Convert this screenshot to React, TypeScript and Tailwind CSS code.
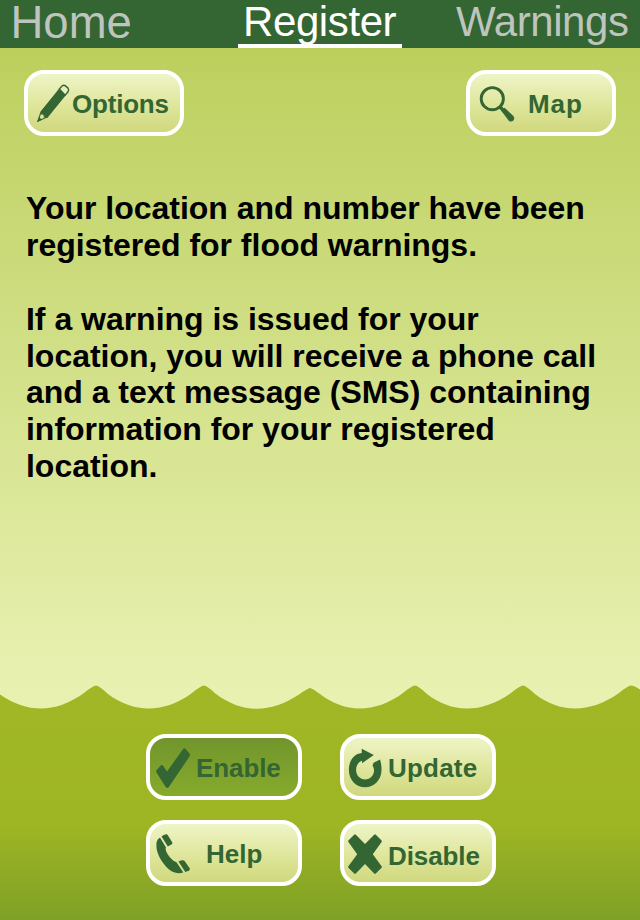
import type { ReactNode } from "react";

const ink = "#336633";

function Tile({ className, active, icon, label, labelClass }: { className: string; active?: boolean; icon: ReactNode; label: string; labelClass: string }) {
  return (
    <button
      className={`flex h-[66px] shrink-0 items-start rounded-[20px] border-4 border-white text-left text-[26px] leading-[30px] font-bold text-[#336633] ${
        active ? "bg-linear-to-b from-[#71952c] to-[#87aa2c]" : "bg-linear-to-b from-[#eff4c6] via-[#e0e79e] to-[#d0d87e]"
      } ${className}`}
    >
      <svg width="42" height="58" viewBox="0 0 42 58" className="shrink-0 overflow-visible" fill={ink}>
        {icon}
      </svg>
      <span className={`block whitespace-nowrap ${labelClass}`}>{label}</span>
    </button>
  );
}

const pencil = (
  <g>
    <path d="M12.6 37.5 L30.8 15 L37.6 21.5 L19.5 43.8 L16.5 43 L16 40.5 L13.2 40Z" />
    <path d="M31.3 15 L34.6 11.6 Q35.8 10.6 37.5 11.9 L40 14.1 Q41.2 15.6 40.2 17.5 L37.2 21.2Z" fill="#e9efb9" stroke={ink} strokeWidth="1.4" />
    <path d="M13 38 L10 47 L18.8 43.3 L16.3 42.8 L15.8 40.3 L13.3 39.8Z" fill="#dce395" stroke={ink} strokeWidth="1.1" />
    <path d="M11 43 L9 48.2 L14 45.8Z" />
  </g>
);

const magnifier = (
  <g>
    <circle cx="22.3" cy="24.7" r="11.1" fill="none" stroke={ink} strokeWidth="2.9" />
    <path d="M29.8 32.8 L34 37" stroke={ink} strokeWidth="3.4" />
    <path d="M31.2 36.8 L34.5 33.8 L43.4 42 Q45 44.4 43.4 46.5 Q41.3 48.5 38.8 46.7Z" />
  </g>
);

const tick = <path d="M6.2 34 Q5.8 33 7 31.5 L11 27.2 Q12.3 26.5 13.3 28 L17 33.5 L33 11.2 Q34.3 9.5 35.8 11.2 L39.5 15.5 Q40.3 17 39.3 18.8 L19 48.7 Q17.3 51 15.5 48.8Z" />;

const refresh = (
  <path d="M17.7 10.8 L29.8 17 L18 25.2 V22.8 C14.5 24 12.1 27 12.1 32 C12.1 37.5 16 41.4 21.1 41.4 C26.2 41.4 30 37.5 30 32.5 Q30 29.5 28.5 27.5 L29.6 24.8 L36 21.6 C37.2 25 37.5 28 37.5 32 C37.5 42 30 49.3 21 49.3 C12 49.3 4.9 42 4.9 32 C4.9 22.5 10 15.8 17.7 15Z" />
);

const phone = (
  <g>
    <path d="M6.7 17.7 Q7.5 15 10 13.6 L16 23.5 C14 26.5 21.5 37 26.5 38.2 L33.3 48.5 Q30 49.5 27 49 C21 48.3 16.5 43.5 13.3 39.3 C8.5 32.5 5.3 25 6.7 17.7Z" />
    <path d="M11.5 12.4 Q13.5 10.5 16.3 10.3 Q17.3 10.3 18 11.6 L22.3 18.4 Q22.7 19.6 21.5 20.6 L17.8 22.5Z" />
    <path d="M28.5 37.5 Q31 36 33.3 36.2 Q34.2 36.3 35 37.6 L39.8 44.5 Q40.3 46 38.8 46.8 L35.3 48Z" />
  </g>
);

const cross = <path d="M10.2 10.7 Q11 10 11.8 10.7 L21 20 L30.2 10.7 Q31 10 31.8 10.7 L37.6 16.6 Q38.2 17.3 37.6 18 L28.8 30.2 L37.6 42.3 Q38.2 43 37.6 43.7 L31.8 49.4 Q31 50 30.2 49.4 L21 40 L11.8 49.4 Q11 50 10.2 49.4 L4.4 43.7 Q3.8 43 4.4 42.3 L13.2 30.2 L4.4 18 Q3.8 17.3 4.4 16.6Z" />;

export default function App() {
  return (
    <main className="flex h-[920px] w-[640px] flex-col overflow-hidden bg-linear-to-b from-[#b9cd55] to-[#e9f1b1] to-[690px] font-['Liberation_Sans',Arial,sans-serif]">
      <nav className="flex h-12 shrink-0 items-start bg-[#336633] whitespace-nowrap text-[#bec4be]">
        <a className="w-[238px] pl-[10.5px] text-[45.5px] leading-[45px]">Home</a>
        <a className="h-12 w-[164px] border-b-4 border-white pl-[5px] text-[42px] leading-[44px] tracking-[-0.4px] text-white">Register</a>
        <a className="ml-[54px] text-[42px] leading-[44px] tracking-[-0.4px]">Warnings</a>
      </nav>
      <div className="flex shrink-0 justify-between px-6 pt-[22px]">
        <Tile className="w-[160px]" icon={pencil} label="Options" labelClass="pt-[15px] pl-[2px] tracking-[-0.2px]" />
        <Tile className="w-[150px]" icon={magnifier} label="Map" labelClass="pt-[15px] pl-[16px] tracking-[0.9px]" />
      </div>
      <section className="h-[549px] shrink-0 pt-[54px] pl-[26px] text-[32px] leading-[36.8px] font-bold tracking-[-0.02px] whitespace-nowrap text-black">
        <p>Your location and number have been<br />registered for flood warnings.</p>
        <p className="pt-[37.2px]">If a warning is issued for your<br />location, you will receive a phone call<br />and a text message (SMS) containing<br />information for your registered<br />location.</p>
      </section>
      <footer className="flex h-[235px] shrink-0 flex-col bg-linear-to-b from-[#a1b725] via-[#9eb524] via-60% to-[#7fa126]">
        <svg width="640" height="25" viewBox="0 0 640 25" className="shrink-0">
          <path d="M0 0 H640 V4.5 Q634 0.5 631 0.5 Q628 0.5 619 8 C590 28.5 560 28.5 535 9 Q526 0.5 523 0.5 Q520 0.5 511 8 C482 28.5 452 28.5 427 9 Q418 0.5 415 0.5 Q412 0.5 403 8 C375 28.5 345 28.5 320 9 Q312 3 310 3 Q308 3 299 9.5 C270 28.5 242 28.5 216 9 Q207 0.5 204 0.5 Q201 0.5 192 8 C164 28.5 134 28.5 108 9 Q99 0.5 96 0.5 Q93 0.5 84 8 C55 28.5 28 28.5 0 9.5Z" fill="#e9f1b1" />
        </svg>
        <div className="ml-[146px] grid w-[350px] grid-cols-2 gap-x-[38px] gap-y-5 pt-6">
          <Tile className="w-[156px]" active icon={tick} label="Enable" labelClass="pt-[15px] pl-[4px] tracking-[-0.1px]" />
          <Tile className="w-[156px]" icon={refresh} label="Update" labelClass="pt-[15px] pl-[2px] tracking-[0.2px]" />
          <Tile className="w-[156px]" icon={phone} label="Help" labelClass="pt-[15px] pl-[14px]" />
          <Tile className="w-[156px]" icon={cross} label="Disable" labelClass="pt-[17px] pl-[2px] tracking-[-0.1px]" />
        </div>
      </footer>
    </main>
  );
}
